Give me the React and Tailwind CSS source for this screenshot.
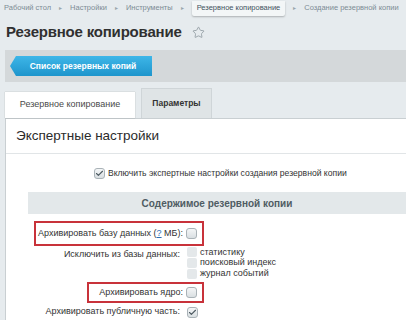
import { Star, Check } from 'lucide-react'

const crumbs = ['Рабочий стол', 'Настройки', 'Инструменты', 'Резервное копирование', 'Создание резервной копии']

function Box({ checked }) {
  return (
    <span className="flex h-[11px] w-[11px] shrink-0 items-center justify-center rounded-[3px] border border-[#a9b2b7] bg-gradient-to-b from-[#f4f6f7] to-[#d9dfe2]">
      {checked && <Check className="h-[9px] w-[9px] text-[#4d5a61]" strokeWidth={3} />}
    </span>
  )
}

function Sep() {
  return <span className="mx-[8px] text-[6px] text-[#9aa6ad]">▸</span>
}

export default function App() {
  return (
    <div className="h-[320px] w-[406px] overflow-hidden bg-[#e6ebee] font-['Liberation_Sans',Arial,sans-serif]">
      {/* breadcrumbs */}
      <div className="flex h-[16px] items-center pl-[4px] text-[7.5px] text-[#7d8c95] whitespace-nowrap">
        {crumbs.map((c, i) => (
          <div key={c} className="flex items-center">
            {i > 0 && <Sep />}
            {i === 3 ? (
              <span className="flex h-[15px] items-center rounded-b-[2px] bg-[#f3f6f7] px-[5px] text-[#3f5260] shadow-[0_1px_2px_rgba(0,0,0,0.25)]">{c}</span>
            ) : (
              <span>{c}</span>
            )}
          </div>
        ))}
      </div>

      {/* title */}
      <div className="flex h-[32px] items-center pl-[6px]">
        <h1 className="text-[15px] font-bold tracking-[-0.2px] text-[#303030]">Резервное копирование</h1>
        <Star className="ml-[10px] h-[13px] w-[13px] text-[#8d989e]" strokeWidth={1.5} />
      </div>

      {/* toolbar */}
      <div className="ml-[5px] mt-[2px] flex h-[32px] items-center bg-[#d4d8da] pl-[5px]">
        <button className="flex h-[20px] w-[142px] items-center justify-center bg-gradient-to-b from-[#3db6e8] to-[#1e95cc] pl-[4px] text-[8.5px] font-bold text-white [clip-path:polygon(6px_0,100%_0,100%_100%,6px_100%,0_50%)]">
          Список резервных копий
        </button>
      </div>

      {/* tabs */}
      <div className="ml-[5px] mt-[6px] flex h-[30px] items-end gap-[6px]">
        <div className="flex h-[26px] w-[130px] items-center justify-center bg-white text-[9px] text-[#4a4a4a] shadow-[0_0_1px_rgba(0,0,0,0.3)]">
          Резервное копирование
        </div>
        <div className="flex h-[30px] w-[71px] items-center justify-center border border-b-0 border-[#cfd5d8] bg-[#dfe4e6] text-[8.5px] font-bold text-[#333]">
          Параметры
        </div>
      </div>

      {/* panel */}
      <div className="ml-[5px] h-[210px] border-l border-t border-[#c9cfd2] bg-white">
        <div className="flex h-[35px] items-center border-b border-[#e1e5e7] pl-[10px] text-[13.5px] text-[#2b2b2b]">
          Экспертные настройки
        </div>

        <div className="flex h-[38px] items-center gap-[3px] pl-[88px] text-[8.6px] text-[#333]">
          <Box checked />
          <span>Включить экспертные настройки создания резервной копии</span>
        </div>

        <div className="ml-[22px] flex h-[22px] items-center justify-center bg-[#e3e8ea] text-[10px] font-bold text-[#4f5c63]">
          Содержимое резервной копии
        </div>

        <div className="pt-[7px] text-[9px] text-[#333]">
          <div className="ml-[28px] flex h-[25px] w-[170px] items-center justify-end gap-[3px] border-2 border-[#c8323a] pr-[5px]">
            <span>Архивировать базу данных (<span className="text-[#2b6fb5] underline">?</span> МБ):</span>
            <Box />
          </div>

          <div className="flex">
            <div className="w-[174px] pt-[2px] text-right">Исключить из базы данных:</div>
            <div className="ml-[7px] flex flex-col pt-[1px]">
              {['статистику', 'поисковый индекс', 'журнал событий'].map((t) => (
                <div key={t} className="flex h-[10.7px] items-center gap-[3px]">
                  <span className="h-[10px] w-[10px] rounded-[2px] bg-[#e4e8ea]" />
                  <span>{t}</span>
                </div>
              ))}
            </div>
          </div>

          <div className="ml-[81px] mt-[3px] flex h-[21px] w-[117px] items-center justify-end gap-[3px] border-2 border-[#c8323a] pr-[5px]">
            <span>Архивировать ядро:</span>
            <Box />
          </div>

          <div className="mt-[2px] flex h-[14px] items-center">
            <div className="w-[174px] text-right">Архивировать публичную часть:</div>
            <div className="ml-[7px]"><Box checked /></div>
          </div>
        </div>
        <div className="mt-[1px] border-b border-[#bfc6ca]" />
      </div>
    </div>
  )
}
